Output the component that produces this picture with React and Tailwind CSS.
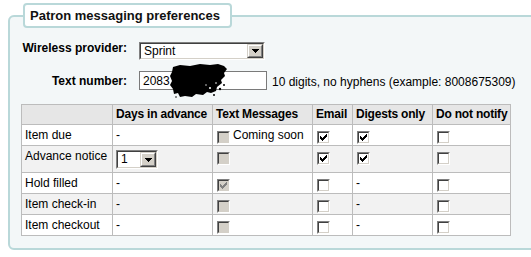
import React from "react";

function Check({ gray }) {
  return (
    <svg width="7" height="7" viewBox="0 0 7 7" className="absolute left-[1px] top-[1px]" shapeRendering="crispEdges">
      <path
        d="M6 0h1v3h-1v1h-1v1h-1v1h-1v1h-1v-1h-1v-1h-1v-3h1v1h1v1h1v-1h1v-1h1v-1h1z"
        fill={gray ? "#808080" : "#000"}
      />
    </svg>
  );
}

function Cb({ checked, disabled }) {
  return (
    <span className="block shrink-0 mt-[3px] -mb-[2px] ml-[1px] w-[13px] h-[13px] border border-t-[#808080] border-l-[#808080] border-b-white border-r-white">
      <span
        className={
          disabled
            ? "relative block w-full h-full border border-t-[#404040] border-l-[#404040] border-b-[#d4d0c8] border-r-[#d4d0c8] bg-[#d4d0c8]"
            : "relative block w-full h-full border border-t-[#404040] border-l-[#404040] border-b-[#d4d0c8] border-r-[#d4d0c8] bg-white"
        }
      >
        {checked && <Check gray={disabled} />}
      </span>
    </span>
  );
}

function DropButton() {
  return (
    <span className="flex items-center justify-center w-[16px] h-full border border-t-[#d4d0c8] border-l-[#d4d0c8] border-b-[#404040] border-r-[#404040]">
      <span className="flex items-center justify-center w-full h-full border border-t-white border-l-white border-b-[#808080] border-r-[#808080] bg-[#d4d0c8]">
        <svg width="7" height="4" viewBox="0 0 7 4" shapeRendering="crispEdges">
          <path d="M0 0h7v1h-1v1h-1v1h-1v1h-1v-1h-1v-1h-1v-1h-1z" fill="#000" />
        </svg>
      </span>
    </span>
  );
}

function Select({ value, className }) {
  return (
    <span
      className={
        "flex border border-t-[#808080] border-l-[#808080] border-b-white border-r-white " + className
      }
    >
      <span className="flex flex-1 items-stretch border border-t-[#404040] border-l-[#404040] border-b-[#d4d0c8] border-r-[#d4d0c8] bg-white">
        <span className="flex-1 pl-[3px] leading-[13px] pt-[1px]">{value}</span>
        <DropButton />
      </span>
    </span>
  );
}

const cell = "border border-[#bcbcbc] px-[3px] py-[3px] leading-[14px] align-top text-left font-normal whitespace-nowrap overflow-hidden";
const hcell = "border border-[#bcbcbc] px-[3px] py-[3px] leading-[13px] align-top text-left font-bold whitespace-nowrap overflow-hidden tracking-[-0.2px]";

function CbCell({ checked, disabled }) {
  return (
    <td className={cell}>
      <Cb checked={checked} disabled={disabled} />
    </td>
  );
}

function Dash() {
  return <td className={cell}>-</td>;
}

export default function App() {
  return (
    <div className="w-[531px] h-[257px] overflow-hidden bg-white font-['Liberation_Sans',Arial,sans-serif] text-[12px] text-black">
      <fieldset className="mt-[3px] ml-[8px] w-[560px] border-2 border-[#b9d8d9] rounded-[6px] bg-[#f3f7f8] pl-[11px] pb-[12px]">
        <legend className="ml-[2px] w-[209px] px-[5px] py-[3px] border-2 border-[#b9d8d9] rounded-[4px] bg-white font-bold text-[13px] leading-[15px] text-[#111] whitespace-nowrap">
          Patron messaging preferences
        </legend>

        <div className="mt-[13px] flex items-start">
          <span className="w-[106px] mr-[12px] text-right font-bold leading-[14px]">Wireless provider:</span>
          <Select value="Sprint" className="mt-[1px] w-[126px] h-[18px]" />
        </div>

        <div className="mt-[11px] flex items-center">
          <span className="w-[106px] mr-[12px] text-right font-bold leading-[14px]">Text number:</span>
          <span className="relative flex items-center w-[128px] h-[19px] border border-[#7a7a7a] bg-white pl-[3px]">
            2083
            <svg
              className="absolute left-[30px] top-[-9px]"
              width="60"
              height="35"
              viewBox="0 0 60 35"
            >
              <path
                d="M3 4 L10 2 L20 3 L30 1 L40 2 L48 1 L54 3 L57 6 L54 10 L55 13 L51 17 L52 20 L47 24 L46 28 L41 30 L37 29 L33 32 L26 31 L22 34 L15 33 L10 34 L8 30 L4 31 L3 26 L0 22 L2 18 L0 13 L2 9 Z"
                fill="#000"
              />
              <circle cx="50" cy="26" r="1.2" fill="#000" />
              <circle cx="54" cy="22" r="1" fill="#000" />
              <circle cx="44" cy="32" r="1" fill="#000" />
              <circle cx="6" cy="34" r="0.8" fill="#000" />
              <circle cx="40" cy="25" r="1" fill="#fff" />
              <circle cx="46" cy="20" r="0.8" fill="#fff" />
              <circle cx="36" cy="22" r="0.7" fill="#fff" />
            </svg>
          </span>
          <span className="ml-[5px] leading-[14px] mt-[2px] whitespace-nowrap">10 digits, no hyphens (example: 8008675309)</span>
        </div>

        <table className="mt-[14px] table-fixed border-collapse w-[489px] bg-white">
          <colgroup>
            <col className="w-[91px]" />
            <col className="w-[100px]" />
            <col className="w-[100px]" />
            <col className="w-[40px]" />
            <col className="w-[80px]" />
            <col className="w-[78px]" />
          </colgroup>
          <thead>
            <tr className="bg-[#e6e6e6]">
              <th className={hcell}></th>
              <th className={hcell}>Days in advance</th>
              <th className={hcell}>Text Messages</th>
              <th className={hcell}>Email</th>
              <th className={hcell}>Digests only</th>
              <th className={hcell}>Do not notify</th>
            </tr>
          </thead>
          <tbody>
            <tr className="bg-white">
              <td className={cell}>Item due</td>
              <Dash />
              <td className={cell}>
                <span className="flex items-start">
                  <Cb disabled />
                  <span className="ml-[3px] leading-[14px]">Coming soon</span>
                </span>
              </td>
              <CbCell checked />
              <CbCell checked />
              <CbCell />
            </tr>
            <tr className="bg-[#f2f2f2]">
              <td className={cell}>Advance notice</td>
              <td className={cell}>
                <Select value="1" className="mt-[1px] w-[42px] h-[19px]" />
              </td>
              <CbCell disabled />
              <CbCell checked />
              <CbCell checked />
              <CbCell />
            </tr>
            <tr className="bg-white">
              <td className={cell}>Hold filled</td>
              <Dash />
              <CbCell disabled checked />
              <CbCell />
              <Dash />
              <CbCell />
            </tr>
            <tr className="bg-[#f2f2f2]">
              <td className={cell}>Item check-in</td>
              <Dash />
              <CbCell disabled />
              <CbCell />
              <Dash />
              <CbCell />
            </tr>
            <tr className="bg-white">
              <td className={cell}>Item checkout</td>
              <Dash />
              <CbCell disabled />
              <CbCell />
              <Dash />
              <CbCell />
            </tr>
          </tbody>
        </table>
      </fieldset>
    </div>
  );
}
